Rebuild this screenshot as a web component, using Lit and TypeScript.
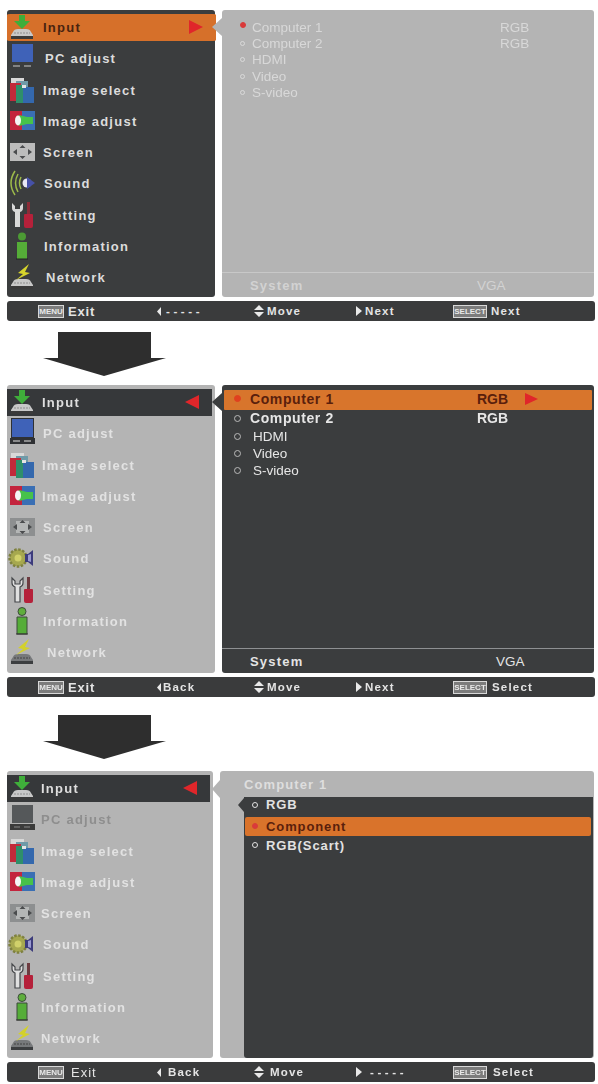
import { LitElement, html, css, svg } from "lit";
import { customElement } from "lit/decorators.js";

type Variant = "dark" | "grey" | "off";

const NAMES = ["Input", "PC adjust", "Image select", "Image adjust", "Screen", "Sound", "Setting", "Information", "Network"];
const KEYS = ["input", "pc", "select", "adjust", "screen", "sound", "setting", "info", "network"];

function tray(v: Variant) {
  const light = v === "dark" ? "#c8c8c8" : "#77797b";
  return svg`<path d="M5 20q1-3 5-3h8q4 0 5 3l2 3v3H3v-3z" fill=${light}/>
    <path d="M3 24h22v3H3z" fill=${v === "dark" ? "#3a3a3a" : "#3c3e40"}/>
    <path d="M6 21h16" stroke=${v === "dark" ? "#8d8d8d" : "#444"} stroke-width="1.2" stroke-dasharray="2 1"/>`;
}

function icon(key: string, v: Variant) {
  const grey = v !== "dark";
  let body;
  switch (key) {
    case "input":
      body = svg`${tray(v)}<path d="M11 3h6v6h5l-8 8-8-8h5z" fill="#3fae3a"/>`;
      break;
    case "pc":
      body = v === "off"
        ? svg`<path d="M4 1h21v18H4z" fill="#55585a"/><path d="M2 20h25v6H2z" fill="#3b3b3b"/><path d="M6 23h6M16 23h6" stroke="#888" stroke-width="1"/>`
        : svg`${grey ? svg`<path d="M3 0h23v20H3z" fill="#2f3134"/>` : ""}
          <path d="M4 1h21v18H4z" fill="#3f62b8"/>
          ${grey ? svg`<path d="M2 20h25v6H2z" fill="#2f3134"/>` : ""}
          <path d="M5 23h7M16 23h7" stroke=${grey ? "#a8a8a8" : "#9a9a9a"} stroke-width="1.4"/>`;
      break;
    case "select":
      body = svg`<path d="M3 3h13v6H3z" fill="#d9d9d9"/><path d="M8 6h12v6H8z" fill="#6f9aa8"/>
        <path d="M2 8h11v18H2z" fill="#c22a3a"/><path d="M8 10h10v18H8z" fill="#2f8f6a"/>
        <path d="M15 12h11v16H15z" fill="#3468ad"/><path d="M14 10h4v3h-4z" fill="#e4e4e4"/>`;
      break;
    case "adjust":
      body = svg`<path d="M2 5h12v19H2z" fill="#c3243d"/><path d="M14 5h13v19H14z" fill="#3a6fb4"/>
        <path d="M11 9l8 2h6v7h-6l-8 2z" fill="#47c24a"/><ellipse cx="10" cy="14.500" rx="3" ry="5" fill="#f4f4f4"/>`;
      break;
    case "screen":
      body = svg`<path d="M2 6h25v18H2z" fill=${grey ? "#8d8f90" : "#bcbcbc"}/>
        ${grey ? svg`<path d="M8 9h13v12H8z" fill="#b4b6b6"/>` : ""}
        <path d="M5 15l4-3v6zM24 15l-4-3v6zM14.500 8l3 3h-6zM14.500 22l3-3h-6z" fill="#4a4c4e"/>`;
      break;
    case "sound":
      body = grey
        ? svg`<circle cx="10" cy="15" r="8.500" fill="#a6a84f" stroke="#7f8140" stroke-width="2.500" stroke-dasharray="2.500 1.500"/>
            <circle cx="10" cy="15" r="3.500" fill="#d0d06a"/>
            <path d="M17 11h3l5-4v16l-5-4h-3z" fill="#3d3c7c"/><path d="M20 12l3-1v8l-3-1z" fill="#9a9ad0"/>`
        : svg`<path d="M7 3q-8 12 0 24M10 6q-5 9 0 18M13 9q-3 6 0 12" fill="none" stroke="#9dba4a" stroke-width="1.500"/>
            <circle cx="19" cy="15" r="4.500" fill="#e8e8f4"/><path d="M19 9l8 6-8 6z" fill="#4651a8"/>`;
      break;
    case "setting":
      body = svg`<path d="M4 3v5q0 3 3 4v15h5V12q3-1 3-4V3l-3 3v3H7V6z" fill=${grey ? "#e0e0e0" : "#d8d8d8"} stroke=${grey ? "#45474a" : "none"} stroke-width="1.200"/>
        <path d="M19 2h3v12h-3z" fill=${grey ? "#6d3b40" : "#8c2c38"}/>
        <path d="M17 14h7q1 0 1 1v11q0 2-2 2h-5q-2 0-2-2V15q0-1 1-1z" fill="#b5213a"/>`;
      break;
    case "info":
      body = svg`<circle cx="14" cy="5.500" r="4" fill=${grey ? "#5fae3c" : "#4c9a34"} stroke=${grey ? "#3c4a3a" : "none"}/>
        <path d="M9 11h10v17H9z" fill="#55ad38" stroke=${grey ? "#3c4a3a" : "none"}/>
        <path d="M8 28h12" stroke=${grey ? "#333" : "#222"} stroke-width="1"/>`;
      break;
    default:
      body = svg`${tray(v)}<path d="M21 2L10 11l5 1-7 6 14-7-5-1 4-8z" fill=${grey ? "#d3d12a" : "#d6d42c"}/>`;
  }
  return html`<svg class="ico" viewBox="0 0 28 30" width="28" height="30">${body}</svg>`;
}

function tri(d: string, w: number, h: number, fill = "#e9e9e9") {
  return html`<svg class="tri" width=${w} height=${h} viewBox="0 0 ${w} ${h}"><path d=${d} fill=${fill}/></svg>`;
}
const LEFT = tri("M4 0v9L0 4.500z", 4, 9);
const RIGHT = tri("M0 0v10l6-5z", 6, 10);
const UPDOWN = tri("M5 0l5 5H0zM5 12l5-5H0z", 10, 12);

interface Row { label: string; value?: string; cls?: string; on?: boolean; nameW?: number; dotPad?: number; }
interface Screen {
  variant: "s1" | "s2" | "s3";
  textX: number[];
  footer: { exitPad: number; back: string; backPad: number; movePad: number; next: string; nextPad: number; sel: string; last: number };
}

const S1_ROWS: Row[] = [
  { label: "Computer 1", value: "RGB", on: true, nameW: 248 },
  { label: "Computer 2", value: "RGB", nameW: 248 },
  { label: "HDMI" }, { label: "Video" }, { label: "S-video" },
];
const S2_ROWS: Row[] = [
  { label: "Computer 1", value: "RGB", on: true, cls: "big sel", nameW: 227, dotPad: 0 },
  { label: "Computer 2", value: "RGB", cls: "big", nameW: 227, dotPad: 0 },
  { label: "HDMI", dotPad: 3 }, { label: "Video", dotPad: 3 }, { label: "S-video", dotPad: 3 },
];
const S3_ROWS: Row[] = [
  { label: "RGB", cls: "first" },
  { label: "Component", on: true, cls: "sel" },
  { label: "RGB(Scart)" },
];

const SCREENS: Screen[] = [
  { variant: "s1", textX: [43, 45, 43, 43, 43, 44, 44, 44, 46],
    footer: { exitPad: 4, back: "-----", backPad: 5, movePad: 3, next: "Next", nextPad: 3, sel: "Next", last: 4 } },
  { variant: "s2", textX: [42, 43, 42, 42, 43, 43, 43, 43, 47],
    footer: { exitPad: 4, back: "Back", backPad: 2, movePad: 3, next: "Next", nextPad: 3, sel: "Select", last: 5 } },
  { variant: "s3", textX: [41, 41, 41, 41, 41, 43, 43, 41, 41],
    footer: { exitPad: 7, back: "Back", backPad: 7, movePad: 6, next: "-----", nextPad: 8, sel: "Select", last: 6 } },
];

@customElement("app-root")
export class AppRoot extends LitElement {
  static styles = css`
    :host { display: block; width: 598px; height: 1084px; background: #fff; overflow: hidden;
      font-family: "Liberation Sans", Arial, sans-serif; }
    .page { padding-top: 10px; filter: blur(0.7px); }
    .screen { margin: 0 4px 0 7px; display: flex; flex-direction: column; gap: 4px; }
    .panels { display: flex; height: 287px; gap: 7px; }
    .s2 .panels { height: 288px; }
    .panel { border-radius: 3px; box-sizing: border-box; position: relative; }
    .menu { width: 208px; flex: none; padding-top: 1.500px; display: grid; grid-template-rows: repeat(9, 31.250px); }
    .s3 .menu { width: 206px; }
    .right { flex: 1; display: flex; flex-direction: column; }
    .dark { background: #3b3d3e; }
    .grey { background: #b4b4b4; }

    .item { display: flex; align-items: center; position: relative; color: #dcdcdc; font-size: 13px; box-sizing: border-box; min-height: 0;
      font-weight: 700; letter-spacing: 1.25px; white-space: nowrap; }
    .ico { flex: none; margin-left: 1px; }
    .item .txt { position: absolute; top: 50%; transform: translateY(-50%); }
    .grey .item { color: #e2e2e2; }
    .grey .item.off { color: #8e8e8e; }
    .item.current { padding: 2px 0; background-clip: content-box; }
    .s1 .item.current { background-color: #d6702a; color: #4a2410; margin-right: -1px; border-radius: 3px; }
    .s2 .item.current, .s3 .item.current { background-color: #36383a; color: #dedede; margin-right: 3px; }
    .mark { margin-left: auto; margin-right: 13px; }

    .list { flex: 1; display: flex; flex-direction: column; }
    .row { display: flex; align-items: center; white-space: nowrap; position: relative; box-sizing: border-box; }
    .dot { flex: none; width: 5px; height: 5px; box-sizing: border-box; border-radius: 50%;
      border: 1px solid currentColor; }
    .dot.on { background: #d93a3a; border-color: #d93a3a; }
    .name { display: inline-block; }

    .s1 .list { padding: 9px 0 0 18px; color: #d8d8d8; font-size: 13.500px; }
    .s1 .row { height: 16.300px; }
    .s1 .row .dot { margin-right: 7px; }
    .s1 .row .dot.on { width: 6px; height: 6px; margin-right: 6px; margin-top: -4px; }

    .s2 .list { padding: 5px 2px 0 12px; color: #e6e6e6; font-size: 13.500px; }
    .s2 .row { height: 17px; padding-bottom: 2px; }
    .s2 .row.big { height: 19.500px; font-size: 14px; font-weight: 700; letter-spacing: 0.6px; }
    .s2 .row.big span:not(.name) { letter-spacing: 0; }
    .s2 .row .dot { width: 7px; height: 7px; border: 1.500px solid #b9b9b9; }
    .s2 .row .dot.on { background: #e0401f; border-color: #e0401f; }
    .s2 .row.sel { margin-left: -10px; padding-left: 10px; background: #d8752c; color: #5a1f0c; border-radius: 1px; }

    .sys { display: flex; align-items: center; height: 25px; box-sizing: border-box; border-top: 1px solid; font-size: 13px;
      font-weight: 700; letter-spacing: 1.200px; white-space: nowrap; padding-left: 28px; }
    .s1 .sys { color: #d2d2d2; border-color: #c8c8c8; }
    .s2 .sys { color: #e4e4e4; border-color: #8e9092; }
    .sys .v { font-weight: 400; letter-spacing: 0; font-size: 13.500px; }

    .head { height: 26px; flex: none; display: flex; align-items: center; padding-left: 24px; color: #dedede;
      font-size: 13px; font-weight: 700; letter-spacing: 1.100px; box-sizing: border-box; }
    .box { flex: 1; margin: 0 1px 0 24px; border-radius: 0 0 3px 3px; position: relative; padding: 0 2px 0 1px; }
    .box .row { height: 18px; padding-left: 7px; color: #e2e2e2; font-size: 13px; font-weight: 700; letter-spacing: 0.900px; }
    .box .row .dot { width: 6px; height: 6px; margin-right: 8px; }
    .box .row.first { height: 20px; padding-bottom: 5px; }
    .box .row.sel { background: #d9732b; color: #5a1f0c; border-radius: 2px; height: 19px; padding-bottom: 1px; }
    .s3 .right { border-radius: 3px; }

    .notch { position: absolute; width: 0; height: 0; border-style: solid; border-color: transparent;
      border-width: 9px 10px 9px 0; left: -10px; }
    .grey > .notch { border-right-color: #b4b4b4; }
    .dark > .notch { border-right-color: #3b3d3e; }
    .s1 .notch { top: 8px; }
    .s2 .notch { top: 8px; }
    .s3 .right > .notch { top: 9px; left: -8px; border-width: 9px 8px 9px 0; }
    .box > .notch { top: 1px; left: -6px; border-width: 7px 6px 7px 0; }

    .foot { height: 20px; width: 588px; flex: none; background: #3a3b3c; border-radius: 3px; display: flex; align-items: center;
      padding-left: 31px; box-sizing: border-box; color: #e4e4e4; font-size: 11.500px; font-weight: 700; letter-spacing: 1.200px; white-space: nowrap; }
    .cell { display: flex; align-items: center; flex: none; }
    .cell.a { width: 119px; }
    .cell.b { width: 97px; }
    .cell.c { width: 102px; }
    .cell.d { width: 97px; }
    .cell.exit { font-size: 13px; letter-spacing: 0.800px; font-weight: 700; }
    .s3 .cell.exit { font-weight: 400; letter-spacing: 1px; }
    .dash { letter-spacing: 3.600px; }
    .kbd { flex: none; box-sizing: border-box; height: 13px; border: 1px solid #d8d8d8; background: #7c7c7c; color: #e8e8e8;
      font-size: 8px; font-weight: 700; letter-spacing: 0; display: inline-flex; align-items: center; justify-content: center; overflow: hidden; }
    .kbd.m { width: 26px; }
    .kbd.s { width: 34px; }

    .arrow { display: block; margin-left: 43px; }
    .arrow.one { margin-top: 11px; margin-bottom: 9px; }
    .arrow.two { margin-top: 18px; margin-bottom: 12px; }
  `;

  private renderMenu(s: Screen) {
    const isDark = s.variant === "s1";
    return html`<div class="panel menu ${isDark ? "dark" : "grey"}">
      ${NAMES.map((n, i) => {
        const off = s.variant === "s3" && i === 1;
        const v: Variant = isDark || i === 0 ? "dark" : off ? "off" : "grey";
        return html`<div class="item ${i === 0 ? "current" : ""} ${off ? "off" : ""}">
          ${icon(KEYS[i], v)}
          <span class="txt" style="left:${s.textX[i] - 7}px">${n}</span>
          ${i === 0
            ? html`<svg class="mark" width="14" height="14" viewBox="0 0 14 14"><path d=${isDark ? "M0 0l14 7-14 7z" : "M14 0L0 7l14 7z"} fill="#e0262a"/></svg>`
            : ""}
        </div>`;
      })}
    </div>`;
  }

  private renderRow(r: Row) {
    return html`<div class="row ${r.cls ?? ""}">
      <i class="dot ${r.on ? "on" : ""}" style=${r.dotPad !== undefined ? `margin-right:${9 + r.dotPad}px` : ""}></i>
      <span class="name" style=${r.nameW ? `width:${r.nameW}px` : ""}>${r.label}</span>
      ${r.value ? html`<span>${r.value}</span>` : ""}
      ${r.cls?.includes("sel") && r.value
        ? html`<svg width="13" height="12" viewBox="0 0 13 12" style="margin-left:17px"><path d="M0 0l13 6-13 6z" fill="#e0262a"/></svg>`
        : ""}
    </div>`;
  }

  private renderRight(s: Screen) {
    if (s.variant === "s3") {
      return html`<div class="panel right grey">
        <div class="notch"></div>
        <div class="head">Computer 1</div>
        <div class="box dark">
          <div class="notch"></div>
          ${S3_ROWS.map((r) => this.renderRow(r))}
        </div>
      </div>`;
    }
    const s1 = s.variant === "s1";
    return html`<div class="panel right ${s1 ? "grey" : "dark"}">
      <div class="notch"></div>
      <div class="list">${(s1 ? S1_ROWS : S2_ROWS).map((r) => this.renderRow(r))}</div>
      <div class="sys">
        <span class="name" style="width:${s1 ? 227 : 246}px">System</span><span class="v">VGA</span>
      </div>
    </div>`;
  }

  private renderFoot(s: Screen) {
    const f = s.footer;
    const lbl = (t: string, pad: number) =>
      html`<span class=${t === "-----" ? "dash" : ""} style="margin-left:${pad}px">${t}</span>`;
    return html`<div class="foot">
      <div class="cell a exit"><span class="kbd m">MENU</span>${lbl("Exit", f.exitPad)}</div>
      <div class="cell b">${LEFT}${lbl(f.back, f.backPad)}</div>
      <div class="cell c">${UPDOWN}${lbl("Move", f.movePad)}</div>
      <div class="cell d">${RIGHT}${lbl(f.next, f.nextPad)}</div>
      <div class="cell"><span class="kbd s">SELECT</span>${lbl(f.sel, f.last)}</div>
    </div>`;
  }

  private bigArrow(cls: string) {
    return html`<svg class="arrow ${cls}" width="123" height="44" viewBox="0 0 123 44">
      <path d="M15 0h93v26h15L61 44 0 26h15z" fill="#2e2e2e"/>
    </svg>`;
  }

  render() {
    const [a, b, c] = SCREENS;
    const one = (s: Screen) => html`<section class="screen ${s.variant}">
      <div class="panels">${this.renderMenu(s)}${this.renderRight(s)}</div>
      ${this.renderFoot(s)}
    </section>`;
    return html`<div class="page">
      ${one(a)}${this.bigArrow("one")}${one(b)}${this.bigArrow("two")}${one(c)}
    </div>`;
  }
}
